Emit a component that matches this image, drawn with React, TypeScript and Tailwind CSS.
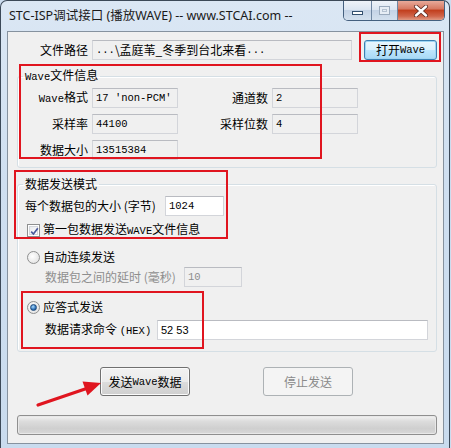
import React from "react";

function M({ children, className = "" }: { children: React.ReactNode; className?: string }) {
  return <span className={`font-['Liberation_Mono',monospace] text-[10.5px] ${className}`}>{children}</span>;
}

function Field({
  className,
  children,
  white = false,
  disabled = false,
}: {
  className: string;
  children?: React.ReactNode;
  white?: boolean;
  disabled?: boolean;
}) {
  return (
    <div
      className={`h-[20px] flex items-center pl-[3px] border border-[#d3d5da] border-t-[#b9bbc1] ${
        white ? "bg-white" : "bg-[#f0f0f0]"
      } ${disabled ? "text-[#8c8c8c]" : "text-black"} ${className}`}
    >
      {children}
    </div>
  );
}

function Checkbox() {
  return (
    <div className="w-[13px] h-[13px] border border-[#8e8f8f] bg-white p-[1px]">
      <div className="w-full h-full border border-[#d4d7dc] bg-[linear-gradient(135deg,#e9ebee,#ffffff)] relative">
        <svg viewBox="0 0 9 9" className="w-[9px] h-[9px] block">
          <path d="M1.2 4.6 L3.4 7 L7.8 1.2" fill="none" stroke="#4a5a9c" strokeWidth="1.7" />
        </svg>
      </div>
    </div>
  );
}

function Radio({ on = false }: { on?: boolean }) {
  return (
    <div className="w-[13px] h-[13px] rounded-full border border-[#8e8f8f] bg-[radial-gradient(circle_at_40%_40%,#ffffff,#dcdcdc)] flex items-center justify-center">
      {on && (
        <div className="w-[7px] h-[7px] rounded-full bg-[radial-gradient(circle_at_40%_35%,#a9dcff,#2d6fb6_60%,#173f73)] border border-[#1d4a7c]" />
      )}
    </div>
  );
}

export default function App() {
  return (
    <div className="relative w-[451px] h-[448px] overflow-hidden bg-[#cbdcef] font-['Noto_Sans_CJK_SC',sans-serif] text-[12px] leading-[14px] text-black">
      <div className="w-[450px] h-[448px] rounded-t-[7px] border border-b-0 border-[#3c4958] bg-[linear-gradient(180deg,#dbe7f4,#cfdff0_40%,#c9dbee)] flex flex-col">
        {/* title bar */}
        <div className="h-[30px] flex items-start pl-[8px] pr-[4px]">
          <span className="mt-[7px] font-['Noto_Sans','Noto_Sans_CJK_SC',sans-serif] text-[12.5px] leading-[16px] text-[#1a1a1a]">
            STC-ISP调试接口 (播放WAVE) -- www.STCAI.com --
          </span>
          <div className="ml-auto flex h-[20px] rounded-b-[5px] overflow-hidden border border-t-0 border-[#45607f]">
            <div className="w-[28px] border-r border-[#6f86a2] bg-[linear-gradient(180deg,#eef3f9,#dce6f2_45%,#c4d3e6_50%,#d3e0ee)] flex items-center justify-center">
              <div className="w-[11px] h-[4px] mt-[4px] bg-white border border-[#34506f]" />
            </div>
            <div className="w-[26px] border-r border-[#6f86a2] bg-[linear-gradient(180deg,#eef3f9,#dce6f2_45%,#c4d3e6_50%,#d3e0ee)] flex items-center justify-center">
              <div className="w-[11px] h-[9px] border border-[#9aaabd] bg-[#e6edf5] p-[2px]">
                <div className="w-full h-full border border-[#b5c2d1]" />
              </div>
            </div>
            <div className="w-[46px] bg-[linear-gradient(180deg,#e8aa9a,#d77a63_40%,#c2401f_50%,#d0654a_80%,#e09a84)] flex items-center justify-center">
              <svg viewBox="0 0 16 12" className="w-[16px] h-[12px]">
                <path d="M3 1.5 L13 10.5 M13 1.5 L3 10.5" stroke="#5a2a22" strokeWidth="4" strokeLinecap="round" />
                <path d="M3 1.5 L13 10.5 M13 1.5 L3 10.5" stroke="#ffffff" strokeWidth="2.4" strokeLinecap="round" />
              </svg>
            </div>
          </div>
        </div>

        {/* client area */}
        <div className="ml-[6px] w-[437px] h-[413px] border border-[#86929f] bg-[#f0f0f0] flex flex-col">
          {/* file path row */}
          <div className="mt-[8px] h-[20px] flex items-center">
            <div className="w-[80px] text-right">文件路径</div>
            <Field className="ml-[4px] w-[260px]">
              <M>...</M>\孟庭苇_冬季到台北来看<M>...</M>
            </Field>
            <div className="ml-[12px] w-[73px] h-[20px] rounded-[3px] border border-[#3c7fb1] bg-[linear-gradient(180deg,#eaf6fd,#d9f0fc_50%,#bee6fd_50%,#a7d9f5)] shadow-[inset_0_0_0_1px_#9fd5f3] flex items-center justify-center">
              打开<M>Wave</M>
            </div>
          </div>

          {/* group 1 */}
          <fieldset className="mt-[8px] ml-[9px] w-[420px] border border-[#d5dfe5] rounded-[3px] pt-[4px] pb-[7px] shadow-[inset_1px_1px_0_#ffffff]">
            <legend className="ml-[5px] px-[2px] leading-[14px]">
              <M>Wave</M>文件信息
            </legend>
            <div className="flex flex-col gap-[6px]">
              <div className="flex items-center h-[20px]">
                <div className="w-[70px] text-right">
                  <M>Wave</M>格式
                </div>
                <Field className="ml-[4px] w-[86px]">
                  <M>17 'non-PCM'</M>
                </Field>
                <div className="w-[90px] text-right">通道数</div>
                <Field className="ml-[4px] w-[86px]">
                  <M>2</M>
                </Field>
              </div>
              <div className="flex items-center h-[20px]">
                <div className="w-[70px] text-right">采样率</div>
                <Field className="ml-[4px] w-[86px]">
                  <M>44100</M>
                </Field>
                <div className="w-[90px] text-right">采样位数</div>
                <Field className="ml-[4px] w-[86px]">
                  <M>4</M>
                </Field>
              </div>
              <div className="flex items-center h-[20px]">
                <div className="w-[70px] text-right">数据大小</div>
                <Field className="ml-[4px] w-[86px]">
                  <M>13515384</M>
                </Field>
              </div>
            </div>
          </fieldset>

          {/* group 2 */}
          <fieldset className="mt-[9px] ml-[9px] w-[420px] border border-[#d5dfe5] rounded-[3px] pt-[5px] pb-[11px] shadow-[inset_1px_1px_0_#ffffff]">
            <legend className="ml-[5px] px-[2px] leading-[14px]">数据发送模式</legend>
            <div className="flex items-center h-[20px] pl-[7px]">
              <div className="w-[140px]">每个数据包的大小 (字节)</div>
              <Field white className="w-[59px]">
                <M>1024</M>
              </Field>
            </div>
            <div className="mt-[6px] h-[16px] flex items-center pl-[9px] gap-[3px]">
              <Checkbox />
              <span>
                第一包数据发送<M>WAVE</M>文件信息
              </span>
            </div>
            <div className="mt-[11px] h-[16px] flex items-center pl-[9px] gap-[3px]">
              <Radio />
              <span>自动连续发送</span>
            </div>
            <div className="mt-[2px] flex items-center h-[20px] pl-[27px]">
              <div className="w-[139px] text-[#8e8e8e]">数据包之间的延时 (毫秒)</div>
              <Field disabled className="w-[58px]">
                <M>10</M>
              </Field>
            </div>
            <div className="mt-[12px] h-[16px] flex items-center pl-[9px] gap-[3px]">
              <Radio on />
              <span>应答式发送</span>
            </div>
            <div className="mt-[5px] flex items-center h-[20px] pl-[27px]">
              <div className="w-[112px]">
                数据请求命令 <M>(HEX)</M>
              </div>
              <Field white className="w-[271px]">
                <span className="font-['Liberation_Sans',sans-serif] text-[11px]">52 53</span>
              </Field>
            </div>
          </fieldset>

          {/* buttons */}
          <div className="mt-[15px] ml-[92px] flex gap-[73px]">
            <div className="w-[90px] h-[29px] rounded-[3px] border border-[#707070] bg-[linear-gradient(180deg,#f2f2f2,#ebebeb_50%,#dddddd_50%,#cfcfcf)] shadow-[inset_0_0_0_1px_#fbfbfb] flex items-center justify-center">
              发送<M>Wave</M>数据
            </div>
            <div className="w-[90px] h-[29px] rounded-[3px] border border-[#adb2b5] bg-[#f4f4f4] text-[#8a8a8a] flex items-center justify-center">
              停止发送
            </div>
          </div>

          {/* progress */}
          <div className="mt-[19px] ml-[9px] w-[420px] h-[20px] rounded-[3px] border border-[#8f8f8f] bg-[linear-gradient(180deg,#f3f3f3,#dcdcdc_30%,#cfcfcf_70%,#d9d9d9)] shadow-[inset_0_0_0_1px_#e8e8e8]" />
        </div>
      </div>

      {/* annotations */}
      <div className="absolute left-[359px] top-[32px] w-[82px] h-[30px] border-2 border-[#e0151f]" />
      <div className="absolute left-[19px] top-[64px] w-[303px] h-[95px] border-2 border-[#e0151f]" />
      <div className="absolute left-[14px] top-[170px] w-[214px] h-[69px] border-2 border-[#e0151f]" />
      <div className="absolute left-[21px] top-[291px] w-[183px] h-[58px] border-2 border-[#e0151f]" />
      <svg className="absolute left-0 top-0 w-[451px] h-[448px] pointer-events-none" viewBox="0 0 451 448">
        <line x1="38" y1="405" x2="88" y2="388" stroke="#e0151f" strokeWidth="3.2" strokeLinecap="round" />
        <polygon points="101,383 82.5,381.5 87.5,395.5" fill="#e0151f" />
      </svg>
    </div>
  );
}
